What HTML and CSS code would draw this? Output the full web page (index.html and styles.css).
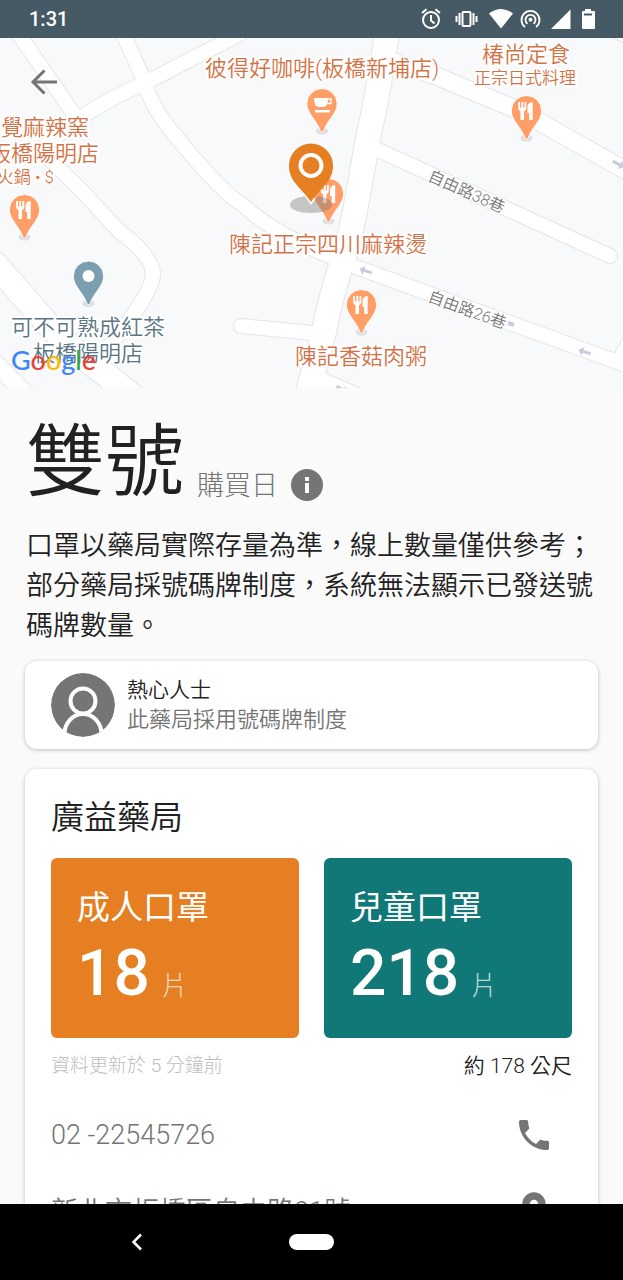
FILE: index.html
```html
<!DOCTYPE html>
<html lang="zh-Hant">
<head>
<meta charset="utf-8">
<meta name="viewport" content="width=device-width, initial-scale=1">
<title>廣益藥局</title>
<link rel="stylesheet" href="styles.css">
</head>
<body>
<header class="status">
  <time class="status-time">1:31</time>
  <svg class="status-icons" viewBox="420 6 180 26" aria-hidden="true">
    <g fill="none" stroke="#fff" stroke-width="2">
      <circle cx="431" cy="20" r="8"/>
      <path d="M431 15v5.500l3.500 3M422 13l4.500-3.700M440 13l-4.500-3.700"/>
      <rect x="462.500" y="12" width="8" height="14" rx="1"/>
      <path d="M459.500 13v12M473.500 13v12M456.500 16v6M476.500 16v6"/>
      <path d="M525 27a9 9 0 1 1 11 0M527.500 23.800a5 5 0 1 1 6 0" stroke-width="1.800"/>
    </g>
    <g fill="#fff">
      <circle cx="530.500" cy="19.800" r="2"/>
      <path d="M489 13.500q12-9 24 0L501 28.500z"/>
      <path d="M551 29L570.500 9.500V29z"/>
      <path fill-rule="evenodd" d="M585 9h6v2h3a1 1 0 0 1 1 1v16a1 1 0 0 1-1 1h-11a1 1 0 0 1-1-1V12a1 1 0 0 1 1-1h2zM584 13.500v2h8v-2z"/>
    </g>
  </svg>
</header>

<main class="screen">
  <section class="map" id="map" aria-label="地圖">
    <svg class="map-canvas" viewBox="0 38 623 350" preserveAspectRatio="xMidYMid slice">
      <defs>
        <g id="roads" fill="none">
          <path class="lane" d="M20 36L76 117M240 34L147 82Q105 100 76 121L40 150L81 190L120 232Q153 256 153 275Q151 295 110 345M124 36L144 80Q150 103 166 124Q220 192 243 205Q275 235 335 258M241 326L322 334M378 150L610 256M345 263L645 372M614 30L636 40"/>
          <path class="street" d="M388 60L436 76L520 111L625 170M645 316L622 358M315 378L360 398M-5 363L28 396"/>
          <path class="avenue" d="M387 34Q377 100 368 138L357 200Q350 240 342 262Q330 300 324 332L308 392M-5 264L38 313Q60 340 100 370L130 394"/>
        </g>
        <g id="pin">
          <ellipse cx="0" cy="27" rx="6" ry="3.500" fill="#dcdee0"/>
          <path d="M0-15.500a15.200 15.200 0 0 1 15.200 15.200C15.200 10 5 16 1.500 27.500Q0 29 -1.500 27.500C-5 16-15.200 10-15.200-.3A15.200 15.200 0 0 1 0-15.500z" stroke="#fff" stroke-width="1"/>
        </g>
        <path id="fork" fill="#fff" d="M-8.300-9h1.800v5.500h1.300V-9h1.900v5.500h1.300V-9h1.800v6q0 2.600-2.300 3.200V9h-3.500V.2Q-8.300-.4-8.300-3zM6.200-9V9H2.600V2H1v-6q0-4.500 5.200-5z"/>
        <path id="oneway" d="M-7 0l5-4.500v3h8v3h-8v3z" fill="#c8cddd"/>
      </defs>
      <rect y="38" width="623" height="350" fill="#f8f9fb"/>
      <use href="#roads" class="road-edge"/>
      <use href="#roads" class="road-fill"/>
      <use href="#oneway" transform="translate(366 271) rotate(18)"/>
      <use href="#oneway" transform="translate(585 352) rotate(18)"/>
      <use href="#oneway" transform="translate(618 164) rotate(208)"/>
      <use href="#oneway" transform="translate(342 389) rotate(205)"/>
      <path d="M508 323l6 2" stroke="#c8cddd" stroke-width="4"/>

      <g fill="#ff9e67">
        <use href="#pin" x="322" y="104"/>
        <use href="#pin" x="526.500" y="111"/>
        <use href="#pin" x="24.500" y="210"/>
        <use href="#pin" x="361.500" y="305"/>
        <use href="#pin" x="328.500" y="194"/>
      </g>
      <use href="#pin" x="88.500" y="276.500" fill="#7b9eb0"/>
      <circle cx="88.500" cy="276" r="6" fill="#fff"/>
      <use href="#fork" x="526.500" y="111"/>
      <use href="#fork" x="24.500" y="210"/>
      <use href="#fork" x="361.500" y="305"/>
      <use href="#fork" x="329" y="194"/>
      <path d="M314 98h14q0 9-5 9h-4q-5 0-5-9zM315 110h15v2.500h-15z" fill="#fff"/>
      <path d="M327 99h4v4.500h-5" fill="none" stroke="#fff" stroke-width="1.300"/>
      <path d="M290 205c0-5 8-8 15-8.500l6 8.500 7-9c8 1 14 4 14 9 0 4.500-9 8-21 8s-21-3.500-21-8z" fill="#777" opacity=".4"/>
      <path d="M311 143.500a22 22 0 0 1 22 22C333 182 321 187 311 202C301 187 289 182 289 165.500a22 22 0 0 1 22-22z" fill="#e67e22"/>
      <circle cx="311" cy="165.500" r="10.500" fill="none" stroke="#fff" stroke-width="4"/>

      <g class="label food">
        <text x="205" y="76">彼得好咖啡(板橋新埔店)</text>
        <text x="482" y="62">椿尚定食</text>
        <text x="474" y="84" class="minor">正宗日式料理</text>
        <text x="89" y="135" text-anchor="end">老覺麻辣窯</text>
        <text x="99" y="161" text-anchor="end">板橋陽明店</text>
        <text x="54" y="183" text-anchor="end" class="minor">火鍋 • $</text>
        <text x="229" y="252">陳記正宗四川麻辣燙</text>
        <text x="295" y="364">陳記香菇肉粥</text>
      </g>
      <g class="label shop">
        <text x="11" y="335">可不可熟成紅茶</text>
        <text x="33" y="361">板橋陽明店</text>
      </g>
      <g class="label road">
        <text transform="translate(427 180) rotate(24)">自由路38巷</text>
        <text transform="translate(427 301) rotate(20)">自由路26巷</text>
      </g>
      <text class="brand" x="11" y="370"><tspan fill="#4285f4">G</tspan><tspan fill="#ea4335">o</tspan><tspan fill="#fbbc05">o</tspan><tspan fill="#4285f4">g</tspan><tspan fill="#34a853">l</tspan><tspan fill="#ea4335">e</tspan></text>
    </svg>
    <button class="back" type="button" aria-label="返回">
      <svg viewBox="0 0 28 28"><path d="M27 14H3M14.500 2.500L3 14l11.500 11.500" fill="none" stroke="#757575" stroke-width="3"/></svg>
    </button>
  </section>

  <section class="intro">
    <div class="day">
      <h1 class="day-name">雙號</h1>
      <span class="day-unit">購買日</span>
      <button class="info" type="button" aria-label="說明">
        <svg viewBox="0 0 32 32"><circle cx="16" cy="16" r="16" fill="#757575"/><path d="M14 8h4v4h-4zM14 14h4v10h-4z" fill="#fff"/></svg>
      </button>
    </div>
    <p class="notice">口罩以藥局實際存量為準，線上數量僅供參考；部分藥局採號碼牌制度，系統無法顯示已發送號碼牌數量。</p>
  </section>

  <article class="card tip">
    <svg class="avatar" viewBox="0 0 64 64" aria-hidden="true">
      <clipPath id="disc"><circle cx="32" cy="32" r="32"/></clipPath>
      <g clip-path="url(#disc)"><circle cx="32" cy="32" r="32" fill="#757575"/>
      <g fill="none" stroke="#fff" stroke-width="4"><circle cx="32" cy="28" r="12.500"/><path d="M13.500 64v-3a18.500 20 0 0 1 37 0v3"/></g></g>
    </svg>
    <div>
      <div class="tip-author">熱心人士</div>
      <div class="tip-text">此藥局採用號碼牌制度</div>
    </div>
  </article>

  <article class="card store">
    <h2 class="store-name">廣益藥局</h2>
    <div class="stocks">
      <section class="stock adult">
        <h3 class="stock-name">成人口罩</h3>
        <div class="stock-count"><strong>18</strong><span>片</span></div>
      </section>
      <section class="stock child">
        <h3 class="stock-name">兒童口罩</h3>
        <div class="stock-count"><strong>218</strong><span>片</span></div>
      </section>
    </div>
    <div class="meta">
      <span class="updated">資料更新於 5 分鐘前</span>
      <span class="distance">約 <span class="thin">178</span> 公尺</span>
    </div>
    <a class="contact" href="tel:0222545726">
      <span>02 -22545726</span>
      <svg viewBox="0 0 24 24" aria-hidden="true"><path d="M6.620 10.790c1.440 2.830 3.760 5.140 6.590 6.590l2.200-2.200c.27-.27.67-.36 1.020-.24 1.120.37 2.330.57 3.570.57.55 0 1 .45 1 1V20c0 .55-.45 1-1 1C10.610 21 3 13.390 3 4c0-.55.45-1 1-1h3.500c.55 0 1 .45 1 1 0 1.250.2 2.450.57 3.570.11.35.03.74-.25 1.020z"/></svg>
    </a>
    <a class="contact" href="#map">
      <span>新北市板橋區自由路81號</span>
      <svg viewBox="0 0 24 24" aria-hidden="true"><path d="M12 2C8.130 2 5 5.130 5 9c0 5.250 7 13 7 13s7-7.750 7-13c0-3.870-3.130-7-7-7zm0 9.500a2.500 2.500 0 0 1 0-5 2.500 2.500 0 0 1 0 5z"/></svg>
    </a>
  </article>
</main>

<nav class="navbar">
  <button class="nav-back" type="button" aria-label="返回"><svg viewBox="0 0 12 18"><path d="M10 1.500L2.500 9l7.500 7.500" fill="none" stroke="#fff" stroke-width="2.500"/></svg></button>
  <button class="nav-home" type="button" aria-label="主畫面"></button>
</nav>
</body>
</html>
```

FILE: styles.css
```css
* { box-sizing: border-box; }

body {
  margin: 0;
  height: 100vh;
  display: flex;
  flex-direction: column;
  background: #fafafa;
  color: #212121;
  font-family: Roboto, "Noto Sans CJK TC", sans-serif;
  font-weight: 350;
}

h1, h2, h3, p { margin: 0; font-weight: inherit; }

button {
  display: block;
  padding: 0;
  border: 0;
  background: none;
}

button svg { display: block; width: 100%; }

.status {
  flex: none;
  display: flex;
  align-items: center;
  justify-content: space-between;
  height: 38px;
  padding: 0 23px 0 29px;
  background: #455a64;
  color: #fff;
}

.status-time { font-size: 20px; font-weight: 500; line-height: 38px; }
.status-icons { width: 180px; height: 26px; }

.screen {
  flex: 1;
  min-height: 0;
  overflow: hidden;
}

.map { position: relative; height: 350px; }
.map-canvas { display: block; width: 100%; height: 100%; }
.back { position: absolute; top: 30px; left: 30px; width: 28px; }

.road-edge { --edge: 2px; stroke: #e3e5e8; stroke-linecap: round; }
.road-fill { --edge: 0px; stroke: #fff; stroke-linecap: round; }
.lane { stroke-width: calc(14px + var(--edge)); }
.street { stroke-width: calc(17px + var(--edge)); }
.avenue { stroke-width: calc(24px + var(--edge)); }

.label {
  font-size: 22px;
  stroke: #fff;
  stroke-width: 4px;
  stroke-linejoin: round;
  paint-order: stroke;
}

.food { fill: #d27347; }
.shop { fill: #5b7684; }
.road { font-size: 16px; fill: #777; stroke-width: 2px; }
.minor { font-size: 17px; }
.brand { font: 500 27px Lato, sans-serif; }

.intro { padding: 29px 25px 16px 26px; }

.day { display: flex; align-items: flex-end; }
.day-name { font-size: 79px; line-height: 92px; }
.day-unit { margin-left: 13px; font-size: 27px; line-height: 46px; font-weight: 300; color: #757575; }
.info { width: 32px; margin: 0 0 8px 13px; }

.notice { margin-top: 17px; font-size: 27px; line-height: 40px; }

.card {
  margin: 0 25px 20px;
  border-radius: 12px;
  background: #fff;
  box-shadow: 0 1px 4px rgba(0, 0, 0, .24);
}

.intro + .card { margin-top: -1px; }

.tip {
  display: flex;
  align-items: center;
  gap: 12px;
  padding: 12px 26px;
}

.avatar { width: 64px; height: 64px; }
.tip-author { font-size: 21px; line-height: 30px; }
.tip-text { font-size: 22px; line-height: 30px; color: #757575; }

.store { padding: 24px 26px; }
.store-name { font-size: 33px; line-height: 50px; }

.stocks {
  display: grid;
  grid-template-columns: 1fr 1fr;
  gap: 25px;
  margin-top: 15px;
}

.stock {
  height: 180px;
  padding: 25px 26px;
  border-radius: 6px;
  color: #fff;
}

.adult { background: #e67e22; }
.child { background: #117878; }
.stock-name { font-size: 33px; line-height: 50px; font-weight: 400; }
.stock-count { display: flex; align-items: baseline; gap: 12px; line-height: 82px; }
.stock-count strong { font-size: 64px; font-weight: 500; }
.stock-count span { font-size: 26px; font-weight: 300; opacity: .7; }

.meta {
  display: flex;
  justify-content: space-between;
  margin-top: 12px;
  line-height: 32px;
}

.updated { font-size: 19px; font-weight: 300; color: #bdbdbd; }
.distance { font-size: 21px; }
.thin { font-weight: 300; }

.contact {
  display: flex;
  align-items: center;
  justify-content: space-between;
  height: 74px;
  padding-right: 18px;
  color: #757575;
  font-size: 27px;
  text-decoration: none;
}

.meta + .contact { margin-top: 16px; }
.contact svg { width: 40px; height: 40px; fill: #757575; }

.navbar {
  flex: none;
  display: grid;
  grid-template-columns: 1fr auto 1fr;
  align-items: center;
  height: 76px;
  padding-right: 1px;
  background: #000;
}

.nav-back { width: 12px; margin-right: 14px; justify-self: center; }
.nav-home { width: 45px; height: 16px; border-radius: 8px; background: #fff; }
```
